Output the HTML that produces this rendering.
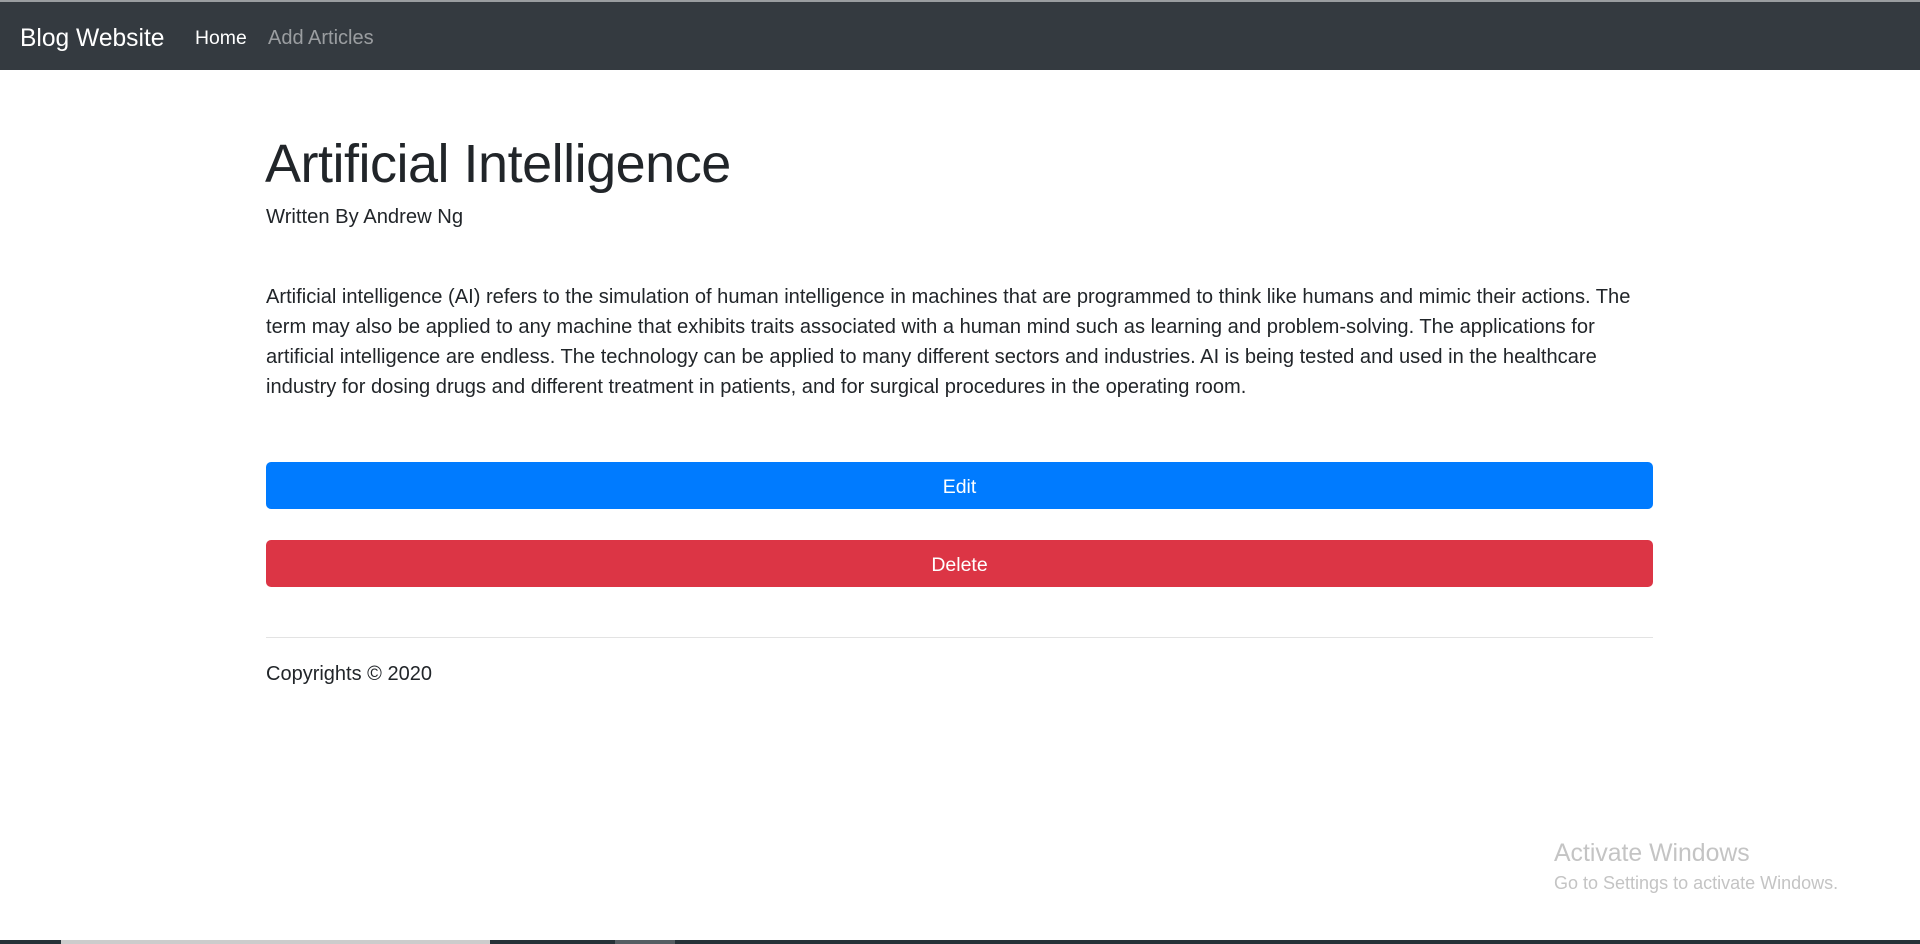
<!DOCTYPE html>
<html><head><meta charset="utf-8">
<style>
*{margin:0;padding:0;box-sizing:border-box}
body{width:1920px;height:944px;overflow:hidden;background:#fff;font-family:"Liberation Sans",sans-serif;color:#212529;position:relative}
.nav{position:absolute;top:0;left:0;width:1920px;height:70px;background:#343a40;border-top:2px solid #9a9da0}
.nav span{position:absolute;top:25px;white-space:nowrap}
.brand{left:20px;font-size:24.6px;color:#fff;top:23px!important}
.home{left:195px;font-size:19.4px;color:#fff}
.add{left:268px;font-size:20px;color:rgba(255,255,255,.5)}
.t{position:absolute;left:266px;white-space:nowrap}
h1{position:absolute;left:265px;top:133px;font-size:54px;font-weight:500;letter-spacing:-0.5px}
.p{font-size:20.1px;line-height:30px;top:282px}
.btn{position:absolute;left:266px;width:1387px;height:47px;border-radius:5px;color:#fff;font-size:19.5px;text-align:center;line-height:51px}
.hr{position:absolute;left:266px;width:1387px;top:637px;height:1px;background:#e3e3e3}
.aw{position:absolute;left:1554px;color:#c4c4c4;white-space:nowrap}
.bar{position:absolute;left:0;top:940px;width:1920px;height:4px;background:#253238}
</style></head><body>
<div class="nav"><span class="brand">Blog Website</span><span class="home">Home</span><span class="add">Add Articles</span></div>
<h1>Artificial Intelligence</h1>
<div class="t" style="top:206px;font-size:20.2px">Written By Andrew Ng</div>
<div class="t p">Artificial intelligence (AI) refers to the simulation of human intelligence in machines that are programmed to think like humans and mimic their actions. The<br>term may also be applied to any machine that exhibits traits associated with a human mind such as learning and problem-solving. The applications for<br>artificial intelligence are endless. The technology can be applied to many different sectors and industries. AI is being tested and used in the healthcare<br>industry for dosing drugs and different treatment in patients, and for surgical procedures in the operating room.</div>
<div class="btn" style="top:462px;background:#007bff">Edit</div>
<div class="btn" style="top:540px;background:#dc3545">Delete</div>
<div class="hr"></div>
<div class="t" style="top:663px;font-size:20px">Copyrights © 2020</div>
<div class="aw" style="top:840px;font-size:24.8px">Activate Windows</div>
<div class="aw" style="top:873px;font-size:18px">Go to Settings to activate Windows.</div>
<div class="bar"><div style="position:absolute;left:61px;width:429px;height:4px;background:#ccc"></div><div style="position:absolute;left:615px;width:60px;height:4px;background:#555e63"></div></div>
</body></html>
